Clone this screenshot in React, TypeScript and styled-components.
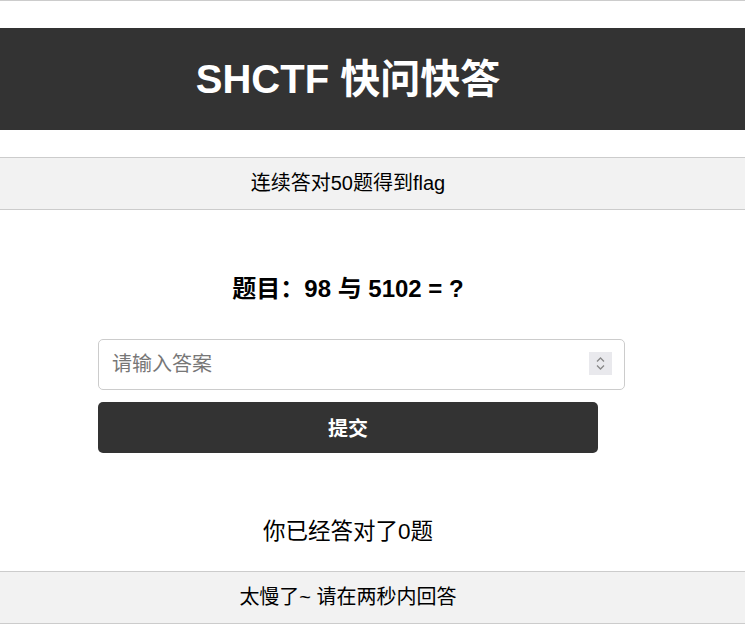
import styled, { createGlobalStyle } from 'styled-components';

const GlobalStyle = createGlobalStyle`
  body {
    margin: 0;
    background: #fff;
    font-family: "Liberation Sans", "Noto Sans CJK SC", sans-serif;
    color: #000;
  }
`;

const Page = styled.div`
  border-top: 1px solid #ccc;
  display: flex;
  flex-direction: column;
`;

const Header = styled.header`
  margin-top: 27px;
  background: #333;
  padding: 28px 0;
`;

const Column = styled.div`
  width: 696px;
  text-align: center;
`;

const Title = styled.h1`
  margin: 0;
  font-size: 40px;
  line-height: 46px;
  font-weight: bold;
  color: #fff;
`;

const Band = styled.div<{ $top: number }>`
  margin-top: ${(p) => p.$top}px;
  background: #f2f2f2;
  border-top: 1px solid #ccc;
  border-bottom: 1px solid #ccc;
  padding: 14px 0;
  font-size: 20px;
  line-height: 23px;
`;

const Main = styled.main`
  width: 696px;
  display: flex;
  flex-direction: column;
  align-items: center;
`;

const Question = styled.h2`
  margin: 65px 0 0;
  font-size: 24px;
  line-height: 28px;
  font-weight: bold;
`;

const Form = styled.form`
  margin-top: 36px;
  width: 500px;
  display: flex;
  flex-direction: column;
  gap: 12px;
`;

const InputWrap = styled.div`
  position: relative;
  width: 527px;
`;

const AnswerInput = styled.input`
  box-sizing: border-box;
  width: 100%;
  height: 51px;
  padding: 12px 40px 12px 13px;
  border: 1px solid #ccc;
  border-radius: 5px;
  font-family: inherit;
  font-size: 20px;
  line-height: 25px;
  outline: none;

  &::placeholder {
    color: #777;
  }
`;

const Spinner = styled.div`
  position: absolute;
  right: 13px;
  top: 13px;
  width: 23px;
  height: 23px;
  background: #e9e9ed;
  display: flex;
  align-items: center;
  justify-content: center;
`;

const SubmitButton = styled.button`
  height: 51px;
  width: 500px;
  border: none;
  border-radius: 5px;
  background: #333;
  color: #fff;
  font-family: inherit;
  font-size: 20px;
  font-weight: bold;
  cursor: pointer;
`;

const Status = styled.p`
  margin: 64px 0 0;
  font-size: 22.5px;
  line-height: 30px;
`;

export default function App() {
  return (
    <>
      <GlobalStyle />
      <Page>
        <Header>
          <Column>
            <Title>SHCTF 快问快答</Title>
          </Column>
        </Header>
        <Band $top={27}>
          <Column>连续答对50题得到flag</Column>
        </Band>
        <Main>
          <Question>题目：98 与 5102 = ?</Question>
          <Form onSubmit={(e) => e.preventDefault()}>
            <InputWrap>
              <AnswerInput type="text" placeholder="请输入答案" />
              <Spinner>
                <svg width="11" height="15" viewBox="0 0 11 15" fill="none" stroke="#888" strokeWidth="1.3">
                  <path d="M2 5.5 L5.5 2 L9 5.5" />
                  <path d="M2 9.5 L5.5 13 L9 9.5" />
                </svg>
              </Spinner>
            </InputWrap>
            <SubmitButton type="submit">提交</SubmitButton>
          </Form>
          <Status>你已经答对了0题</Status>
        </Main>
        <Band $top={24}>
          <Column>太慢了~ 请在两秒内回答</Column>
        </Band>
      </Page>
    </>
  );
}
